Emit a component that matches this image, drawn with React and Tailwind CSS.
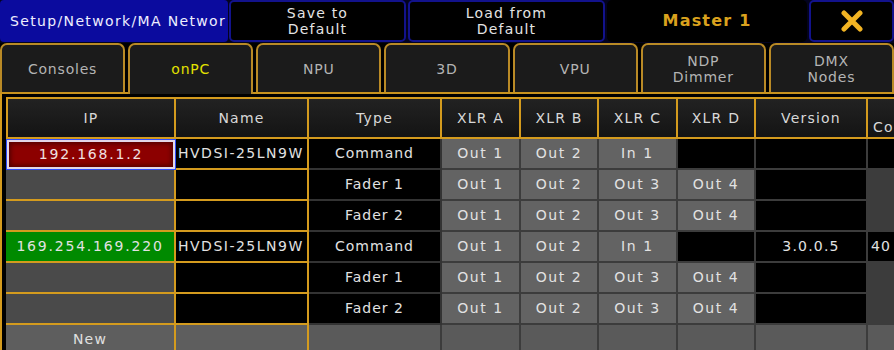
const tabs = ["Consoles", "onPC", "NPU", "3D", "VPU", "NDP\nDimmer", "DMX\nNodes"];

const rows = [
  { ip: "192.168.1.2", kind: "red", name: "HVDSI-25LN9W", type: "Command", xlr: ["Out 1", "Out 2", "In 1", null], version: "", co: "black", coText: "" },
  { ip: "", name: "", type: "Fader 1", xlr: ["Out 1", "Out 2", "Out 3", "Out 4"], version: "", co: "dark" },
  { ip: "", name: "", type: "Fader 2", xlr: ["Out 1", "Out 2", "Out 3", "Out 4"], version: "", co: "dark" },
  { ip: "169.254.169.220", kind: "green", name: "HVDSI-25LN9W", type: "Command", xlr: ["Out 1", "Out 2", "In 1", null], version: "3.0.0.5", co: "black", coText: "40" },
  { ip: "", name: "", type: "Fader 1", xlr: ["Out 1", "Out 2", "Out 3", "Out 4"], version: "", co: "dark" },
  { ip: "", name: "", type: "Fader 2", xlr: ["Out 1", "Out 2", "Out 3", "Out 4"], version: "", co: "dark" },
];

function Cell({ className, children }) {
  return (
    <div className={`h-[31px] border-r-2 border-b-2 flex items-center justify-center whitespace-nowrap overflow-hidden ${className}`}>
      {children}
    </div>
  );
}

function Head({ children, first, className = "" }) {
  return (
    <div
      className={`h-[42px] border-t-2 border-r-2 border-b-2 border-[#d49b1e] bg-[#1a1a1a] bg-gradient-to-b from-[#222222] to-[#141414] flex items-center justify-center text-[#d8d8d8] whitespace-nowrap overflow-hidden ${first ? "border-l-2" : ""} ${className}`}
    >
      {children}
    </div>
  );
}

function TopButton({ className, children }) {
  return (
    <div className={`h-full rounded-[5px] border-2 border-[#12128c] bg-black flex items-center justify-center text-center leading-[16px] text-[#e4e4e4] ${className}`}>
      {children}
    </div>
  );
}

export default function App() {
  return (
    <div className="w-[894px] h-[350px] overflow-hidden bg-black font-['DejaVu_Sans',sans-serif] text-[14px] tracking-[1.2px] text-[#e2e2e2]">
      {/* top bar */}
      <div className="flex h-[43px] bg-[#03031e] pb-[1px]">
        <div className="w-[228px] h-full rounded-[4px] bg-[#0b0b9e] flex items-center pl-[10px] text-[#eeeeff] tracking-[1.35px] whitespace-nowrap overflow-hidden">
          Setup/Network/MA Networ
        </div>
        <TopButton className="w-[177px] ml-[1px]">
          Save to
          <br />
          Default
        </TopButton>
        <TopButton className="w-[197px] ml-[2px]">
          Load from
          <br />
          Default
        </TopButton>
        <div className="w-[200px] ml-[2px] h-full rounded-[5px] bg-black flex items-center justify-center text-[#daa21e] text-[16px] font-bold">
          Master 1
        </div>
        <TopButton className="w-[85px] ml-[2px]">
          <svg width="24" height="22" viewBox="0 0 24 22">
            <path d="M4 3 L20 19 M20 3 L4 19" stroke="#f2b423" strokeWidth="5" strokeLinecap="round" />
          </svg>
        </TopButton>
      </div>

      {/* tabs */}
      <div className="flex gap-[3px] h-[51px] items-end border-b-2 border-[#c8921e] tracking-[0.8px]">
        {tabs.map((t) => {
          const active = t === "onPC";
          return (
            <div
              key={t}
              className={`flex-1 h-[49px] rounded-t-[7px] border-2 border-b-0 border-[#b98a26] bg-[#1b1b1b] flex items-center justify-center text-center whitespace-pre-line leading-[16px] ${
                active ? "text-[#e2e200] -mb-[2px] h-[51px] pb-[2px]" : "text-[#b4b4b4]"
              }`}
            >
              {t}
            </div>
          );
        })}
      </div>

      {/* content */}
      <div className="border-l-2 border-[#d49b1e] pl-[4px] pt-[3px] h-[260px]">
        <div className="grid w-max grid-cols-[170px_133px_133px_79px_78px_79px_78px_112px_60px]">
          <Head first>IP</Head>
          <Head>Name</Head>
          <Head>Type</Head>
          <Head>XLR A</Head>
          <Head>XLR B</Head>
          <Head>XLR C</Head>
          <Head>XLR D</Head>
          <Head>Version</Head>
          <Head className="!justify-start pl-[5px] pt-[18px]">Comment</Head>

          {rows.map((r, i) => (
            <div key={i} className="contents">
              {r.kind === "red" ? (
                <div className="h-[31px] border border-[#2c4cff]">
                  <div className="h-full border-2 border-[#e4d6e6] bg-[#8c0000] shadow-[inset_0_0_4px_2px_#560000] flex items-center justify-center text-[#f0e0e0] tracking-[1.8px]">
                    {r.ip}
                  </div>
                </div>
              ) : (
                <Cell className={`border-[#d49b1e] tracking-[1.8px] ${r.kind === "green" ? "bg-[#008a00]" : "bg-[#4a4a4a]"}`}>{r.ip}</Cell>
              )}
              <Cell className="border-[#d49b1e] bg-black !justify-start pl-[2px] tracking-[1.5px]">{r.name}</Cell>
              <Cell className="border-[#333333] bg-black tracking-[1px]">{r.type}</Cell>
              {r.xlr.map((x, j) =>
                x ? (
                  <Cell key={j} className="border-[#3c3c3c] bg-[#636363] tracking-[1.6px]">{x}</Cell>
                ) : (
                  <Cell key={j} className="border-[#3c3c3c] bg-black"></Cell>
                )
              )}
              <Cell className="border-[#3c3c3c] bg-black">{r.version}</Cell>
              <Cell className={`border-[#3c3c3c] !justify-start pl-[3px] ${r.co === "black" ? "bg-black" : "bg-[#3c3c3c]"}`}>{r.coText}</Cell>
            </div>
          ))}

          <Cell className="border-[#d49b1e] bg-[#5e5e5e] text-[#e0e0e0]">New</Cell>
          <Cell className="border-[#d49b1e] bg-[#5e5e5e]"></Cell>
          <Cell className="border-[#3c3c3c] bg-[#5a5a5a]"></Cell>
          <Cell className="border-[#3c3c3c] bg-[#5a5a5a]"></Cell>
          <Cell className="border-[#3c3c3c] bg-[#5a5a5a]"></Cell>
          <Cell className="border-[#3c3c3c] bg-[#5a5a5a]"></Cell>
          <Cell className="border-[#3c3c3c] bg-[#5a5a5a]"></Cell>
          <Cell className="border-[#3c3c3c] bg-[#5a5a5a]"></Cell>
          <Cell className="border-[#3c3c3c] bg-[#5a5a5a]"></Cell>
        </div>
      </div>
    </div>
  );
}
